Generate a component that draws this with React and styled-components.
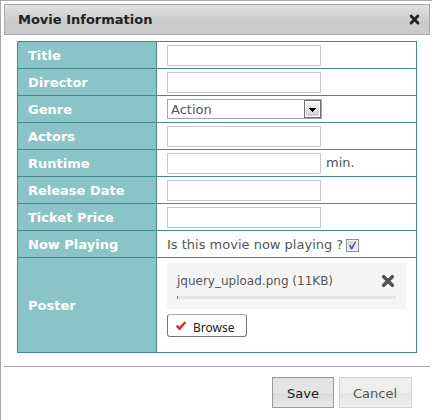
import React from "react";
import styled, { createGlobalStyle } from "styled-components";

const GlobalStyle = createGlobalStyle`
  * { box-sizing: border-box; }
  body {
    margin: 0;
    background: #fff;
    color: #555;
    font: 13px/18px Verdana, "DejaVu Sans", sans-serif;
  }
  button, input, select { font: inherit; color: inherit; margin: 0; }
`;

const Dialog = styled.form`
  min-height: 100vh;
  padding: 3px 2px 0 3px;
  border: solid #aaa;
  border-width: 1px 0 0 1px;
`;

const TitleBar = styled.header`
  display: flex;
  align-items: center;
  justify-content: space-between;
  height: 31px;
  padding: 0 9px 0 13px;
  border: 1px solid #aaa;
  background: linear-gradient(#e2e2e2, #cacaca 60%, #cccccc);
`;

const Title = styled.h1`
  margin: 0;
  color: #222;
  font-size: 13px;
  line-height: 18px;
`;

const IconButton = styled.button`
  display: flex;
  padding: 0;
  border: 0;
  background: none;
  cursor: pointer;
`;

const Body = styled.main`
  padding: 6px 13px 13px;
`;

const FormTable = styled.table`
  width: 100%;
  border: 1px solid #458b8b;
  border-collapse: collapse;
`;

const Label = styled.th`
  width: 139px;
  padding: 2px 10px 0;
  border: 1px solid #458b8b;
  background: #8ac4c6;
  color: #fff;
  font-weight: bold;
  text-align: left;
`;

const Cell = styled.td`
  height: ${(p) => (p.$tall ? 95 : 27)}px;
  padding: ${(p) => (p.$tall ? "0 10px 10px" : "0 10px")};
  border: 1px solid #458b8b;
`;

const Field = styled.div`
  display: flex;
  align-items: center;
  gap: ${(p) => (p.$check ? 3 : 5)}px;
  padding-top: ${(p) => (p.$check ? 2 : 0)}px;
`;

const TextInput = styled.input`
  width: 154px;
  height: 21px;
  padding: 0 4px;
  border: 1px solid #c8c8cc;
  background: #fff;
`;

const SelectBox = styled.div`
  position: relative;
  width: 155px;
  height: 20px;

  svg {
    position: absolute;
    top: 1px;
    right: 1px;
    pointer-events: none;
  }
`;

const Select = styled.select`
  display: block;
  width: 100%;
  height: 100%;
  padding: 1px 20px 0 3px;
  border: 1px solid #a5a5a8;
  border-radius: 0;
  background: #fff;
  appearance: none;
`;

const CheckBox = styled.span`
  position: relative;
  width: 13px;
  height: 13px;

  input {
    display: block;
    width: 13px;
    height: 13px;
    border: 1px solid #8e8f8f;
    background: linear-gradient(135deg, #ccd0d5, #f6f6f6);
    box-shadow: inset 0 0 0 1px #f4f4f4;
    appearance: none;
  }
  svg {
    position: absolute;
    inset: 0;
    pointer-events: none;
  }
  input:not(:checked) + svg { display: none; }
`;

const Upload = styled.div`
  display: flex;
  flex-direction: column;
  align-items: flex-start;
  gap: 5px;
`;

const FileItem = styled.div`
  width: 100%;
  padding: 10px;
  background: #f5f5f5;
`;

const FileRow = styled.div`
  display: flex;
  align-items: center;
  justify-content: space-between;
  height: 16px;
  padding-right: 1px;
  font-size: 12px;
  line-height: 16px;
`;

const Progress = styled.div`
  height: 3px;
  margin-top: 7px;
  background: #e5e5e5;
`;

const ProgressFill = styled.div`
  width: 1px;
  height: 100%;
  background: #0099ff;
`;

const BrowseButton = styled.button`
  display: flex;
  align-items: center;
  gap: 6px;
  width: 80px;
  height: 23px;
  padding: 4px 0 0 7px;
  border: 1px solid #777;
  border-top-color: #aaa;
  border-radius: 3px;
  background: #fff;
  color: #222;
  font: 12px/18px "Segoe UI", "Noto Sans", sans-serif;

  svg { margin-top: -3px; }
`;

const Footer = styled.footer`
  display: flex;
  justify-content: flex-end;
  gap: 5px;
  padding: 10px 18px 11px;
  border-top: 1px solid #aaa;
`;

const ActionButton = styled.button`
  height: 31px;
  padding: 2px 14px 0 ${(p) => (p.$primary ? 14 : 13)}px;
  border: 1px solid ${(p) => (p.$primary ? "#999" : "#d3d3d3")};
  background: ${(p) =>
    p.$primary
      ? "linear-gradient(#e4e4e4 0 50%, #d9d9d9 50%, #e8e8e8)"
      : "linear-gradient(#eeeeee 0 50%, #e4e4e4 50%, #f0f0f0)"};
  && { color: ${(p) => (p.$primary ? "#212121" : "#555")}; }
`;

const Cross = ({ size, color }) => (
  <svg width={size} height={size} viewBox="0 0 12 12" aria-hidden="true">
    <path d="M2.3 2.3 9.7 9.7M9.7 2.3 2.3 9.7" stroke={color} strokeWidth="3.1" strokeLinecap="round" />
  </svg>
);

function Row({ label, id, tall, children }) {
  return (
    <tr>
      <Label scope="row">
        <label htmlFor={id}>{label}</label>
      </Label>
      <Cell $tall={tall}>{children}</Cell>
    </tr>
  );
}

function TextRow({ label, id, unit }) {
  return (
    <Row label={label} id={id}>
      <Field>
        <TextInput id={id} type="text" />
        {unit && <span>{unit}</span>}
      </Field>
    </Row>
  );
}

export default function App() {
  return (
    <>
      <GlobalStyle />
      <Dialog onSubmit={(e) => e.preventDefault()}>
        <TitleBar>
          <Title>Movie Information</Title>
          <IconButton type="button" aria-label="Close">
            <Cross size={11} color="#222" />
          </IconButton>
        </TitleBar>
        <Body>
          <FormTable>
            <tbody>
              <TextRow label="Title" id="title" />
              <TextRow label="Director" id="director" />
              <Row label="Genre" id="genre">
                <SelectBox>
                  <Select id="genre" defaultValue="Action">
                    <option>Action</option>
                    <option>Comedy</option>
                    <option>Drama</option>
                  </Select>
                  <svg width="17" height="18" viewBox="0 0 17 18" aria-hidden="true">
                    <defs>
                      <linearGradient id="arrowFace" x2="0" y2="1">
                        <stop stopColor="#f4f4f4" />
                        <stop offset="1" stopColor="#cfcfcf" />
                      </linearGradient>
                    </defs>
                    <rect x=".5" y=".5" width="16" height="17" fill="#fff" stroke="#707070" />
                    <rect x="2" y="2" width="13" height="14" fill="url(#arrowFace)" />
                    <path d="M5 8h7v1h-1v1h-1v1H9v1H8v-1H7v-1H6V9H5z" fill="#000" />
                  </svg>
                </SelectBox>
              </Row>
              <TextRow label="Actors" id="actors" />
              <TextRow label="Runtime" id="runtime" unit="min." />
              <TextRow label="Release Date" id="release" />
              <TextRow label="Ticket Price" id="price" />
              <Row label="Now Playing" id="playing">
                <Field $check>
                  <label htmlFor="playing">Is this movie now playing ?</label>
                  <CheckBox>
                    <input id="playing" type="checkbox" defaultChecked />
                    <svg width="13" height="13" viewBox="0 0 13 13" aria-hidden="true">
                      <path d="M3 6.3 4.6 5.8 5.6 8 9 2.4 10.3 2.6 6.3 10.6 5 10.6Z" fill="#4b5f9e" />
                    </svg>
                  </CheckBox>
                </Field>
              </Row>
              <Row label="Poster" id="poster" tall>
                <Upload>
                  <FileItem>
                    <FileRow>
                      <span>jquery_upload.png (11KB)</span>
                      <IconButton type="button" aria-label="Remove file">
                        <Cross size={14} color="#555" />
                      </IconButton>
                    </FileRow>
                    <Progress>
                      <ProgressFill />
                    </Progress>
                  </FileItem>
                  <BrowseButton id="poster" type="button">
                    <svg width="12" height="10" viewBox="0 0 12 10" aria-hidden="true">
                      <path d="M.6 5.2 2.4 3.9 4.5 5.7 9.4.5 11.4 1.6 4.6 9.5Z" fill="#d42a2a" />
                    </svg>
                    Browse
                  </BrowseButton>
                </Upload>
              </Row>
            </tbody>
          </FormTable>
        </Body>
        <Footer>
          <ActionButton $primary type="submit">Save</ActionButton>
          <ActionButton type="button">Cancel</ActionButton>
        </Footer>
      </Dialog>
    </>
  );
}
